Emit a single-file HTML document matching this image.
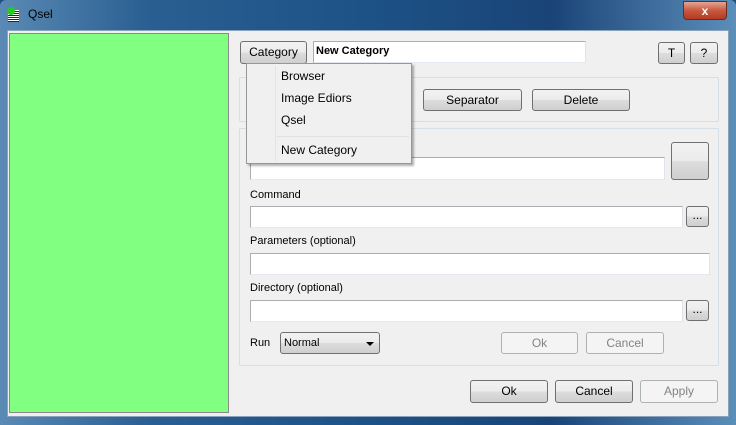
<!DOCTYPE html><html><head><style>
*{box-sizing:border-box;margin:0;padding:0}
body{width:736px;height:425px;overflow:hidden;font-family:"Liberation Sans",Tahoma,sans-serif;font-size:11px;color:#000;background:#1f4f7e;position:relative}
.a{position:absolute}
.title{left:0;top:0;width:736px;height:425px;border-radius:6px 6px 0 0;background:linear-gradient(90deg,#5a8ab4 0%,#2a5f92 20%,#1d5286 50%,#1a4478 75%,#5c8eba 100%)}
.client{left:7px;top:30px;width:722px;height:387px;background:#f0f0f0;border:1px solid #8aa3bd}
.btn{position:absolute;border:1px solid #707070;border-radius:3px;background:linear-gradient(#f2f2f2 0%,#ebebeb 50%,#dddddd 51%,#cfcfcf 100%);text-align:center;font-size:12px;line-height:20px}
.dis{border-color:#adb2b5;background:#f4f4f4;color:#838383}
.edit{position:absolute;background:#fff;border:1px solid #abadb3;border-bottom-color:#e3e9ef;border-right-color:#e2e3ea}
.lbl{position:absolute;font-size:11px}
.grp{position:absolute;border:1px solid #d5dfe5;border-radius:2px}
</style></head><body>
<div class="a title"></div>
<div class="a" style="left:8px;top:10px;width:11px;height:12px;background:repeating-linear-gradient(#fff 0 1px,#703 1px 2px)"></div>
<div class="a" style="left:7px;top:7px;width:8px;height:8px;border-radius:50%;background:#2c2"></div>
<div class="a" style="left:28px;top:7px;font-size:12px;color:#000">Qsel</div>
<div class="a" style="left:683px;top:1px;width:44px;height:19px;border:1px solid #6b2a22;border-radius:0 0 4px 4px;background:linear-gradient(#e8a493,#c75a41 50%,#b43a1e);color:#fff;font-weight:bold;text-align:center;font-size:12px;line-height:18px">x</div>
<div class="a client"></div>
<div class="a" style="left:9px;top:33px;width:220px;height:380px;background:#80ff80;border:1px solid #8a8a8a"></div>
<div class="btn" style="left:240px;top:41px;width:67px;height:23px">Category</div>
<div class="edit" style="left:313px;top:41px;width:273px;height:22px;font-weight:bold;font-size:11px;padding:3px 2px">New Category</div>
<div class="btn" style="left:658px;top:42px;width:27px;height:22px">T</div>
<div class="btn" style="left:690px;top:42px;width:28px;height:22px">?</div>
<div class="grp" style="left:239px;top:77px;width:480px;height:45px"></div>
<div class="btn" style="left:380px;top:89px;width:32px;height:22px"></div>
<div class="btn" style="left:423px;top:89px;width:99px;height:22px">Separator</div>
<div class="btn" style="left:532px;top:89px;width:98px;height:22px">Delete</div>
<div class="grp" style="left:239px;top:128px;width:480px;height:238px"></div>
<div class="edit" style="left:250px;top:157px;width:415px;height:23px"></div>
<div class="btn" style="left:671px;top:142px;width:38px;height:38px"></div>
<div class="lbl" style="left:250px;top:189px">Command</div>
<div class="edit" style="left:250px;top:206px;width:433px;height:22px"></div>
<div class="btn" style="left:686px;top:206px;width:23px;height:21px;line-height:16px">...</div>
<div class="lbl" style="left:250px;top:235px">Parameters (optional)</div>
<div class="edit" style="left:250px;top:253px;width:460px;height:22px"></div>
<div class="lbl" style="left:250px;top:282px">Directory (optional)</div>
<div class="edit" style="left:250px;top:300px;width:433px;height:22px"></div>
<div class="btn" style="left:686px;top:300px;width:23px;height:21px;line-height:16px">...</div>
<div class="lbl" style="left:250px;top:337px">Run</div>
<div class="btn" style="left:280px;top:332px;width:100px;height:22px;text-align:left;padding-left:3px;font-size:11px">Normal<span style="position:absolute;right:5px;top:9px;border:4px solid transparent;border-top:4px solid #000;border-bottom:0"></span></div>
<div class="btn dis" style="left:501px;top:332px;width:77px;height:22px">Ok</div>
<div class="btn dis" style="left:586px;top:332px;width:78px;height:22px">Cancel</div>
<div class="btn" style="left:470px;top:380px;width:78px;height:23px">Ok</div>
<div class="btn" style="left:555px;top:380px;width:78px;height:23px">Cancel</div>
<div class="btn dis" style="left:640px;top:380px;width:78px;height:23px">Apply</div>
<div class="a" style="left:246px;top:63px;width:166px;height:101px;background:#f0f0f0;border:1px solid #979797;box-shadow:2px 2px 2px rgba(0,0,0,.3)">
<div class="a" style="left:28px;top:2px;width:1px;height:95px;background:#e2e3e3"></div>
<div class="a" style="left:34px;top:5px;font-size:12px">Browser</div>
<div class="a" style="left:34px;top:27px;font-size:12px">Image Ediors</div>
<div class="a" style="left:34px;top:49px;font-size:12px">Qsel</div>
<div class="a" style="left:30px;top:72px;width:132px;height:1px;background:#e0e0e0"></div>
<div class="a" style="left:34px;top:79px;font-size:12px">New Category</div>
</div>
</body></html>
